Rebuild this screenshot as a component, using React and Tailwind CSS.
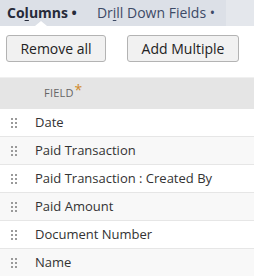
const FIELDS = [
  'Date',
  'Paid Transaction',
  'Paid Transaction : Created By',
  'Paid Amount',
  'Document Number',
  'Name',
];

function DragHandle() {
  return (
    <div className="grid grid-cols-2 gap-x-[2px] gap-y-[2px] w-[6px] shrink-0">
      {[0, 1, 2, 3, 4, 5].map((i) => (
        <span key={i} className="w-[2px] h-[2px] bg-[#9a9a9a]" />
      ))}
    </div>
  );
}

export default function App() {
  return (
    <div className="w-[254px] h-[276px] overflow-hidden bg-white text-[#333] font-['Open_Sans','Liberation_Sans',sans-serif]">
      {/* tabs */}
      <div className="flex h-[26px] bg-[#e4e7ec]">
        <div className="relative flex items-center w-[226px] bg-[#dce0e7] text-[14px] leading-none">
          <span className="ml-[7px] font-bold text-[#262b3a]">
            Co<span className="underline underline-offset-2">l</span>umns •
          </span>
          <span className="ml-[20px] text-[#3d4a66]">
            Dr<span className="underline underline-offset-2">i</span>ll Down Fields •
          </span>
          <span className="absolute left-[35px] bottom-0 w-0 h-0 border-l-[6px] border-r-[6px] border-b-[5px] border-l-transparent border-r-transparent border-b-white" />
        </div>
      </div>

      {/* buttons */}
      <div className="flex gap-[21px] pl-[6px] pt-[9px]">
        <button className="h-[27px] w-[100px] rounded-[3px] border border-[#b3b3b3] bg-[#f1f1f1] text-[14px] text-[#222]">
          Remove all
        </button>
        <button className="h-[27px] w-[112px] rounded-[3px] border border-[#b3b3b3] bg-[#f1f1f1] text-[14px] text-[#222]">
          Add Multiple
        </button>
      </div>

      {/* table */}
      <div className="mt-[15px] border-t border-[#f0f0f0]">
        <div className="flex items-center h-[31px] bg-[#e5e5e5] pl-[44px]">
          <span className="text-[11px] text-[#666] tracking-[0.2px]">FIELD</span>
          <span className="text-[14px] text-[#d08a2a] leading-none -mt-[8px] ml-[1px]">*</span>
        </div>
        {FIELDS.map((f, i) => (
          <div
            key={f}
            className={`flex items-center h-[28px] border-b border-[#e6e6e6] pl-[11px] ${i % 2 ? 'bg-[#f8f8f8]' : 'bg-white'}`}
          >
            <DragHandle />
            <span className="ml-[18px] text-[13px] text-[#333]">{f}</span>
          </div>
        ))}
      </div>
    </div>
  );
}
